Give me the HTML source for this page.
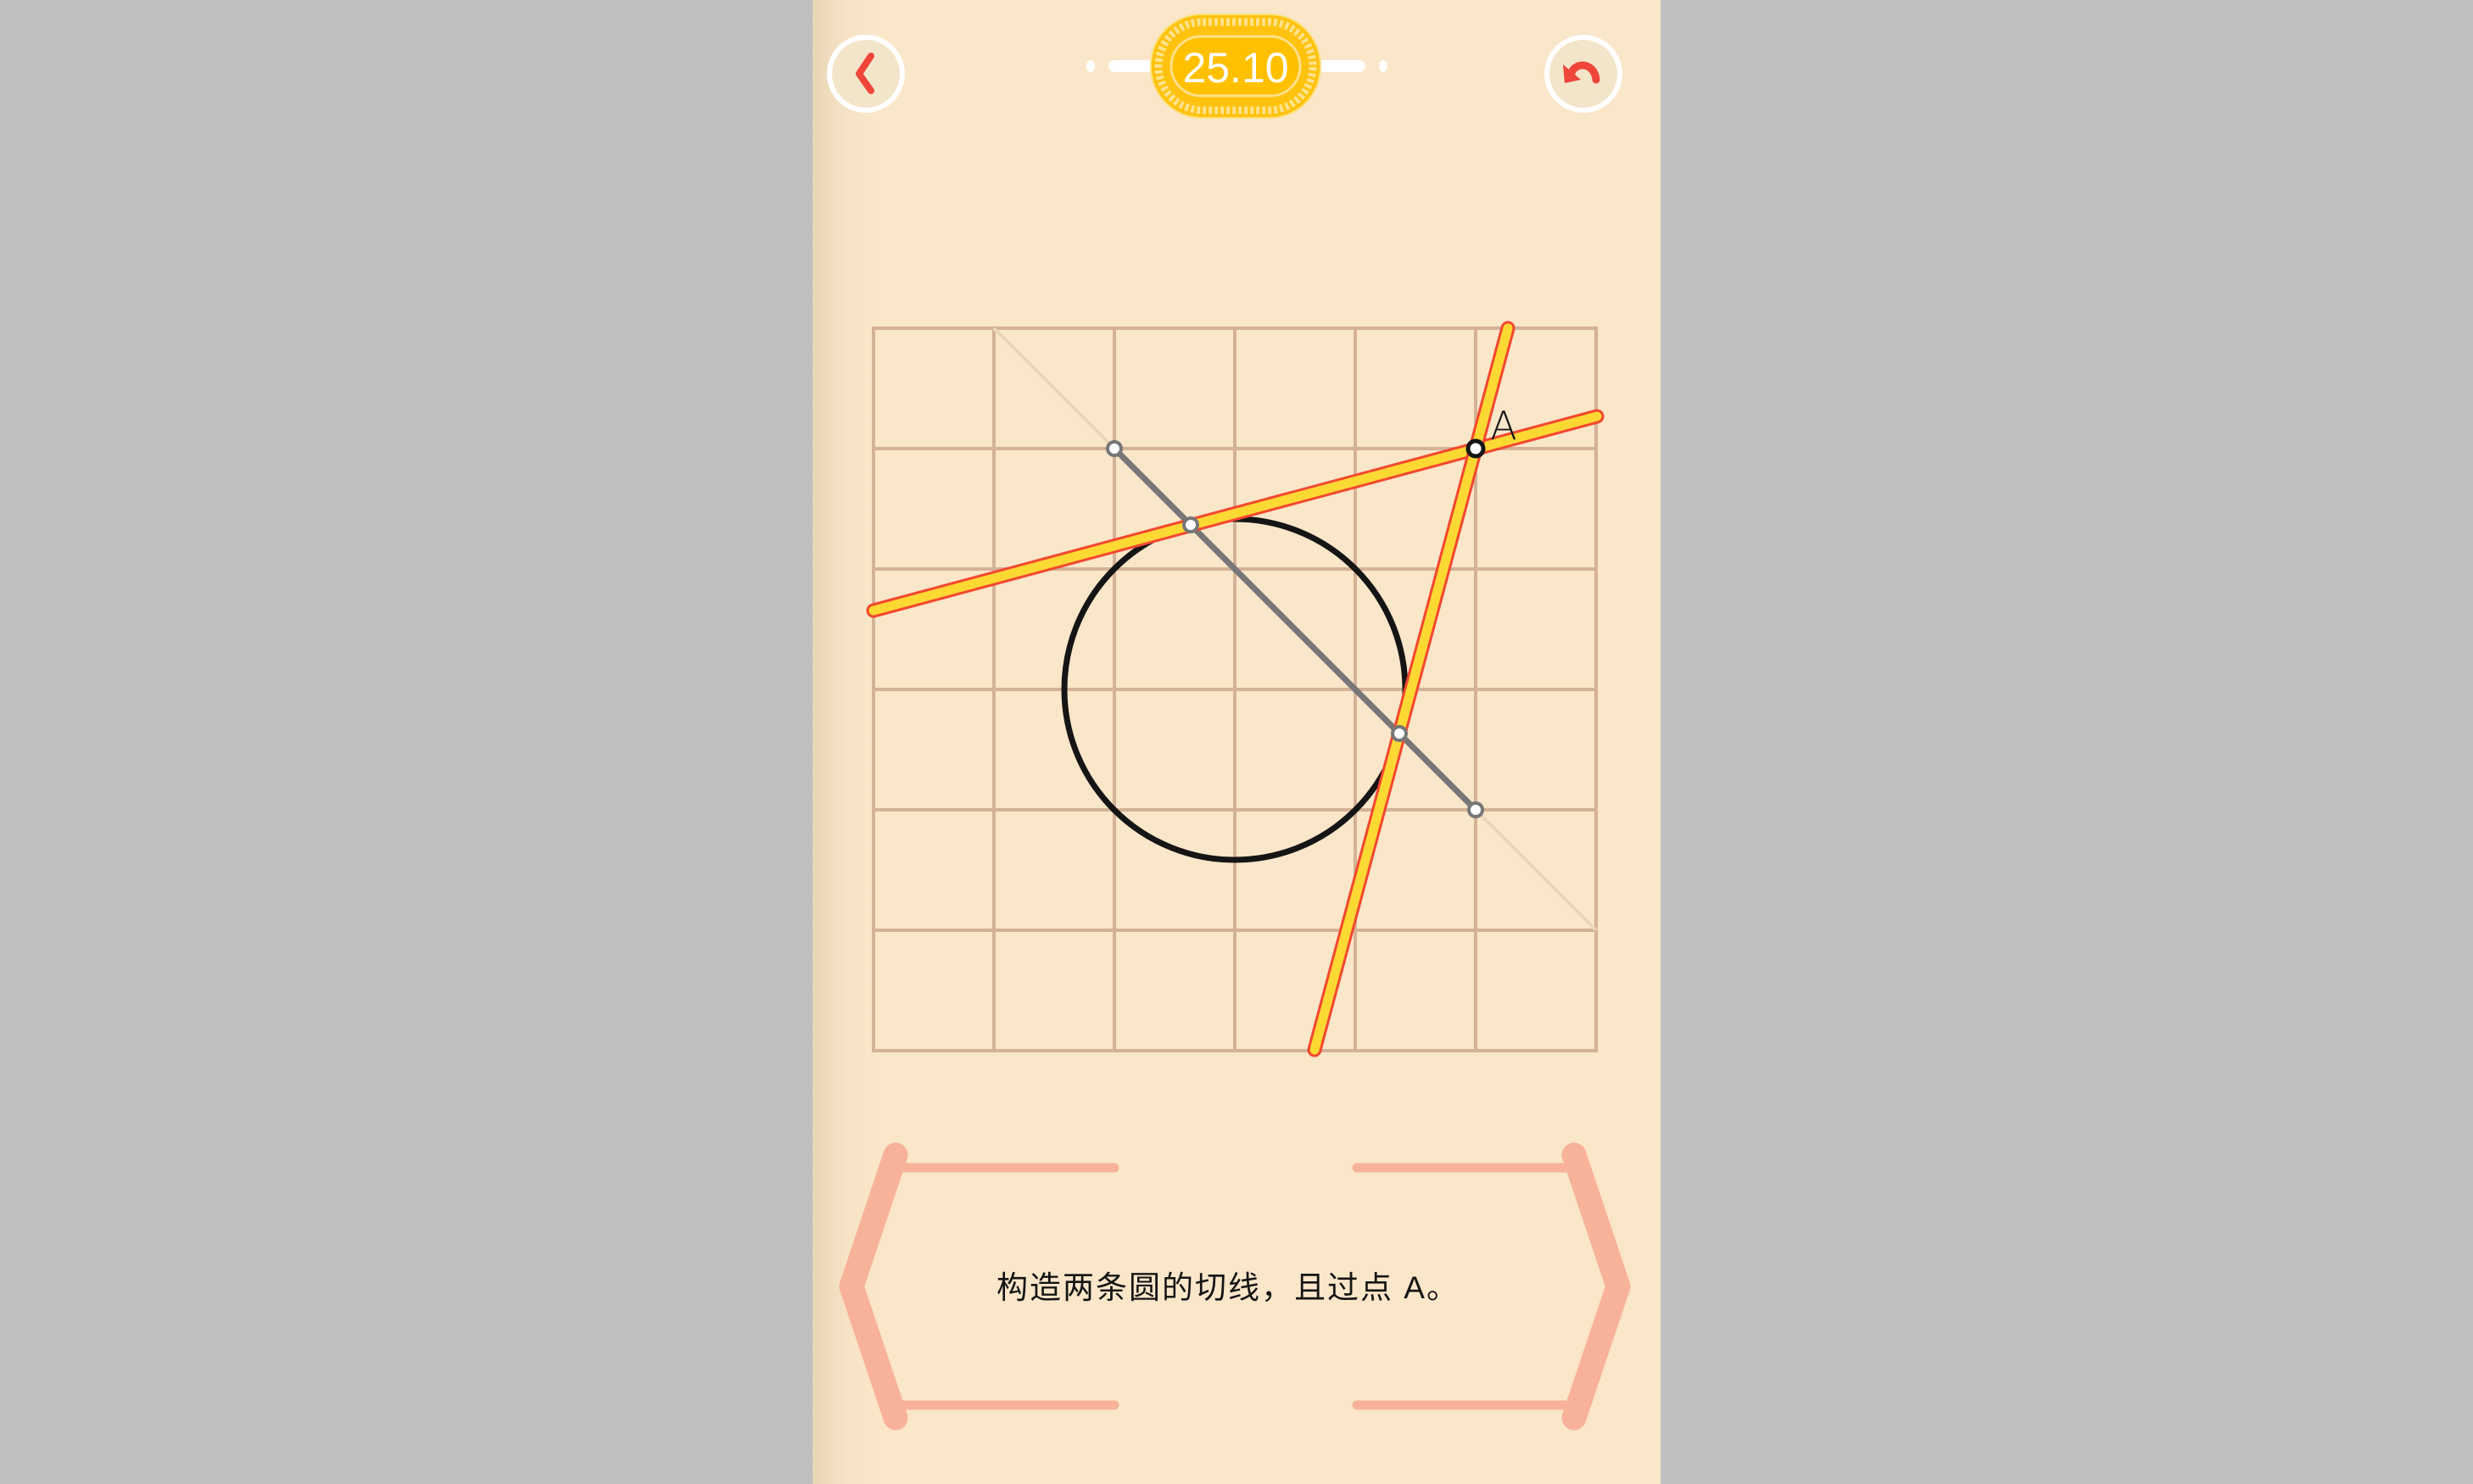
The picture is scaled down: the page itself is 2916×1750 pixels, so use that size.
<!DOCTYPE html>
<html><head><meta charset="utf-8"><style>
html,body{margin:0;padding:0;width:2916px;height:1750px;overflow:hidden;background:#c0c0c0;}
.panel{position:absolute;left:958px;top:0;width:1000px;height:1750px;background:linear-gradient(to right,#e9d6b7 0px,#f6e3c6 40px,#fae6c9 75px,#fae6c9 100%);}
svg{position:absolute;left:0;top:0;}
</style></head><body>
<div class="panel"></div>
<svg width="2916" height="1750" viewBox="0 0 2916 1750" xmlns="http://www.w3.org/2000/svg">
<circle cx="1021" cy="87" r="43" fill="#f3e5ca" stroke="#fff" stroke-width="6"/>
<path d="M1027 66 L1013 87 L1027 107" fill="none" stroke="#f0463a" stroke-width="8" stroke-linecap="round" stroke-linejoin="round"/>
<circle cx="1867" cy="87" r="43" fill="#f3e5ca" stroke="#fff" stroke-width="6"/>
<path d="M1852 90 C1854 72 1880 72 1882 94" fill="none" stroke="#f0463a" stroke-width="9" stroke-linecap="round"/>
<path d="M1843 76 L1845 98 L1864 94 Z" fill="#f0463a"/>
<ellipse cx="1286" cy="78" rx="5" ry="7" fill="#fff"/>
<rect x="1307" y="71" width="60" height="14" rx="7" fill="#fff"/>
<rect x="1548" y="71" width="62" height="14" rx="7" fill="#fff"/>
<ellipse cx="1631" cy="78" rx="5" ry="7" fill="#fff"/>
<rect x="1357" y="17" width="200" height="122" rx="60" fill="#ffc20e" stroke="#ffe07a" stroke-width="2"/>
<rect x="1366" y="26" width="182" height="104" rx="52" fill="none" stroke="#ffe28a" stroke-width="9" stroke-dasharray="4 3"/>
<rect x="1381" y="43" width="152" height="70" rx="35" fill="#ffc000" stroke="#ffe08a" stroke-width="3"/>
<text x="1457" y="97" text-anchor="middle" font-family="Liberation Sans, sans-serif" font-size="50" fill="#fff">25.10</text>
<g stroke="#d4b296" stroke-width="4" fill="none">
<rect x="1030" y="387" width="852" height="852"/>
<path d="M1172 387V1239M1314 387V1239M1456 387V1239M1598 387V1239M1740 387V1239M1030 529H1882M1030 671H1882M1030 813H1882M1030 955H1882M1030 1097H1882"/>
</g>
<line x1="1172" y1="387" x2="1882" y2="1097" stroke="#ead6bb" stroke-width="4"/>
<circle cx="1456" cy="813" r="201" fill="none" stroke="#151515" stroke-width="7"/>
<line x1="1314" y1="529" x2="1740" y2="955" stroke="#777" stroke-width="7"/>
<g stroke-linecap="round">
<line x1="1030" y1="720" x2="1883" y2="491" stroke="#f4472f" stroke-width="17"/>
<line x1="1030" y1="720" x2="1883" y2="491" stroke="#fcd833" stroke-width="11"/>
<line x1="1778" y1="387" x2="1550" y2="1238" stroke="#f4472f" stroke-width="17"/>
<line x1="1778" y1="387" x2="1550" y2="1238" stroke="#fcd833" stroke-width="11"/>
</g>
<circle cx="1314" cy="529" r="8" fill="#fff" stroke="#777" stroke-width="4"/>
<circle cx="1740" cy="955" r="8" fill="#fff" stroke="#777" stroke-width="4"/>
<circle cx="1404" cy="619" r="8" fill="#fff" stroke="#777" stroke-width="4"/>
<circle cx="1650" cy="865" r="8" fill="#fff" stroke="#777" stroke-width="4"/>
<circle cx="1740" cy="529" r="9" fill="#fff" stroke="#151515" stroke-width="5"/>
<text x="1773" y="518" text-anchor="middle" font-family="DejaVu Sans, sans-serif" font-weight="200" font-size="46" fill="#151515">A</text>
<g stroke="#f8b29a" fill="none" stroke-linecap="round" stroke-linejoin="round">
<path d="M1056 1362 L1004 1517 L1056 1672" stroke-width="29"/>
<path d="M1856 1362 L1908 1517 L1856 1672" stroke-width="29"/>
<path d="M1056 1377H1314M1056 1657H1314M1600 1377H1856M1600 1657H1856" stroke-width="11"/>
</g>
<text x="1448" y="1531" text-anchor="middle" font-family="Liberation Sans, Noto Sans CJK SC, sans-serif" font-size="37" letter-spacing="2" fill="#151515">构造两条圆的切线，且过点 A。</text>
</svg>
</body></html>
